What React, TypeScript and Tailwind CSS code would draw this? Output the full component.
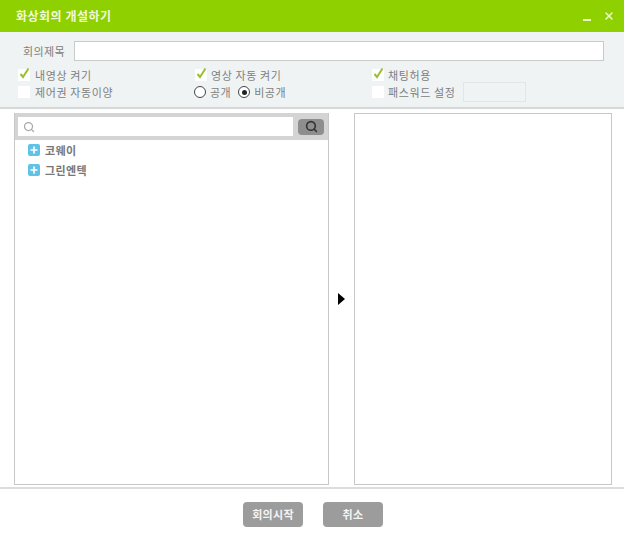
import { Plus, Search, X } from "lucide-react";

const font = "font-['Noto_Sans_CJK_KR','Liberation_Sans',sans-serif]";

function Check({ checked, label, tight }: { checked?: boolean; label: string; tight?: boolean }) {
  return (
    <label className="flex h-[14px] items-center">
      <span className="relative h-[12px] w-[12px] shrink-0 bg-white">
        {checked && (
          <svg className="absolute -top-[2px] left-[1px]" width="11" height="12" viewBox="0 0 11 12">
            <path d="M1.5 7 L4 10 L9.5 1.5" fill="none" stroke="#9ac030" strokeWidth="2" />
          </svg>
        )}
      </span>
      <span className={`${tight ? "ml-[4px]" : "ml-[5px]"} whitespace-nowrap text-[11px] leading-[14px] tracking-[0.6px] text-[#808080]`}>
        {label}
      </span>
    </label>
  );
}

function Radio({ checked, label }: { checked?: boolean; label: string }) {
  return (
    <label className="flex items-center">
      <span className="flex h-[12px] w-[12px] items-center justify-center rounded-full border border-[#444] bg-white">
        {checked && <span className="h-[5px] w-[5px] rounded-full bg-[#222]" />}
      </span>
      <span className="ml-[4px] whitespace-nowrap text-[11px] leading-[14px] tracking-[0.5px] text-[#808080]">{label}</span>
    </label>
  );
}

function TreeRow({ label }: { label: string }) {
  return (
    <div className="flex h-[20px] items-center pl-[13px]">
      <span className="flex h-[12px] w-[12px] items-center justify-center rounded-[2px] bg-[#5fc2e6]">
        <Plus size={10} strokeWidth={4} color="#fff" />
      </span>
      <span className="ml-[5px] text-[11px] font-bold leading-[14px] tracking-[0.4px] text-[#777]">{label}</span>
    </div>
  );
}

export default function App() {
  return (
    <div className={`flex h-[534px] w-[624px] flex-col bg-white ${font}`}>
      <div className="flex h-[32px] shrink-0 items-center justify-between bg-[#8fd000] pl-[16px] pr-[9px]">
        <span className="text-[12px] font-bold tracking-[0.5px] text-[#f1f8dc]">화상회의 개설하기</span>
        <div className="flex items-center gap-[12px]">
          <span className="mt-[7px] h-[2px] w-[8px] bg-[#eef8d0]" />
          <X size={12} strokeWidth={3} color="#eef8d0" />
        </div>
      </div>

      <div className="h-[77px] shrink-0 border-b-2 border-[#d6d8d8] bg-[#eff3f3]">
        <div className="flex items-center pl-[23px] pt-[9px]">
          <span className="w-[51px] text-[11px] leading-[20px] tracking-[0.4px] text-[#808080]">회의제목</span>
          <div className="h-[20px] w-[530px] border border-[#c9cbcb] bg-white" />
        </div>
        <div className="mt-[7px] grid grid-cols-[177px_177px_1fr] gap-y-[3px] pl-[18px]">
          <Check checked label="내영상 켜기" />
          <Check checked tight label="영상 자동 켜기" />
          <Check checked tight label="채팅허용" />
          <Check label="제어권 자동이양" />
          <div className="-ml-[1px] flex h-[14px] items-center gap-[7px]">
            <Radio label="공개" />
            <Radio checked label="비공개" />
          </div>
          <div className="relative flex h-[14px] items-center">
            <Check tight label="패스워드 설정" />
            <span className="absolute left-[91px] top-[-3px] h-[20px] w-[63px] border border-[#e3e6e6] bg-[#eff3f3]" />
          </div>
        </div>
      </div>

      <div className="mt-[4px] flex h-[372px] shrink-0 pl-[14px]">
        <div className="w-[315px] border border-t-0 border-[#c8c8c8]">
          <div className="flex h-[27px] items-center bg-[#d4d4d4] pl-[3px]">
            <div className="flex h-[19px] w-[275px] items-center bg-white pl-[5px]">
              <Search size={12} strokeWidth={2.5} color="#a8a8a8" />
            </div>
            <div className="ml-[5px] flex h-[16px] w-[26px] items-center justify-center rounded-[4px] bg-[#8e8e8e]">
              <Search size={13} strokeWidth={3} color="#333" />
            </div>
          </div>
          <div>
            <TreeRow label="코웨이" />
            <TreeRow label="그린엔텍" />
          </div>
        </div>
        <div className="flex w-[25px] items-center justify-center">
          <span className="ml-[-1px] h-0 w-0 border-y-[6px] border-l-[7px] border-y-transparent border-l-black" />
        </div>
        <div className="w-[258px] border border-[#c8c8c8]" />
      </div>

      <div className="mt-[2px] flex h-[47px] shrink-0 justify-center gap-[20px] border-t-2 border-[#dcdcdc] pl-[2px] pt-[13px]">
        <button className="h-[25px] w-[60px] rounded-[4px] bg-[#9c9c9c] text-[11px] font-bold tracking-[0.3px] text-[#f4f4f4]">회의시작</button>
        <button className="h-[25px] w-[60px] rounded-[4px] bg-[#9c9c9c] text-[11px] font-bold tracking-[0.3px] text-[#f4f4f4]">취소</button>
      </div>
    </div>
  );
}
